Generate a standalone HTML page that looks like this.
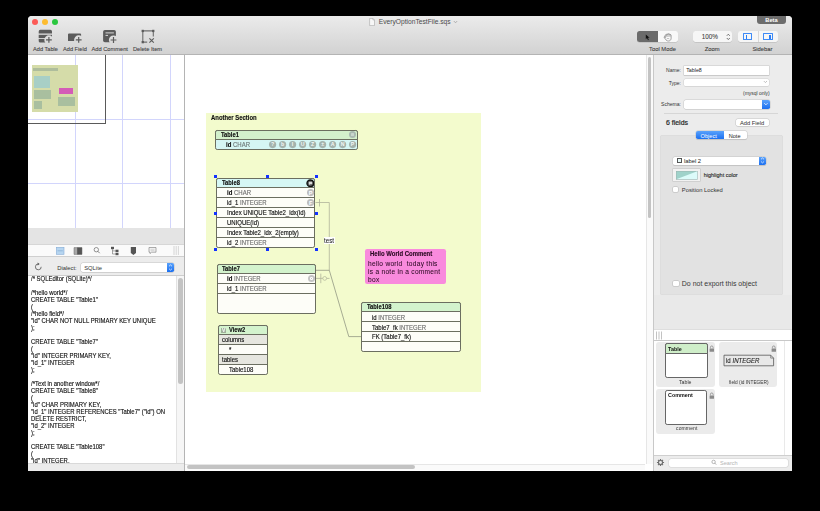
<!DOCTYPE html>
<html><head><meta charset="utf-8">
<style>
*{box-sizing:border-box;margin:0;padding:0}
html,body{width:820px;height:511px;overflow:hidden;background:#000}
body{position:relative;font-family:"Liberation Sans",sans-serif;color:#222}
.a{position:absolute}
.t{position:absolute;white-space:pre;line-height:1}
</style></head><body>
<div class="a" style="left:28.00px;top:16.00px;width:764.00px;height:454.50px;background:#ececec;border-radius:4px 4px 0 0"></div>
<div class="a" style="left:28.00px;top:16.00px;width:764.00px;height:39.00px;background:linear-gradient(#ebebeb,#d2d2d2);border-bottom:1px solid #b4b4b4;border-radius:4px 4px 0 0"></div>
<div class="a" style="left:32.00px;top:18.60px;width:6.2px;height:6.2px;border-radius:50%;background:#fc5b57"></div>
<div class="a" style="left:41.90px;top:18.60px;width:6.2px;height:6.2px;border-radius:50%;background:#fdbc2f"></div>
<div class="a" style="left:52.00px;top:18.60px;width:6.2px;height:6.2px;border-radius:50%;background:#2ac73f"></div>
<svg class="a" style="left:369px;top:18px" width="6" height="8" viewBox="0 0 6 8"><path d="M0.6 0.4H3.9L5.5 2V7.6H0.6Z" fill="#f7f7f7" stroke="#a8a8a8" stroke-width="0.6"/><path d="M3.9 0.4V2H5.5" fill="none" stroke="#a8a8a8" stroke-width="0.5"/></svg>
<div class="t" style="left:378.80px;top:19.00px;font-size:6.660px;font-weight:normal;color:#4b4b4b;">EveryOptionTestFile.sqs</div>
<svg class="a" style="left:453px;top:20px" width="5" height="4" viewBox="0 0 5 4"><path d="M0.8 1L2.5 2.8L4.2 1" fill="none" stroke="#9a9a9a" stroke-width="0.7"/></svg>
<div class="a" style="left:757.00px;top:16.00px;width:29.00px;height:8.00px;background:#6c6c6c;border-radius:0 0 3px 3px"></div>
<div class="t" style="left:765.30px;top:18.00px;font-size:5.700px;font-weight:bold;color:#fff;">Beta</div>
<svg class="a" style="left:37px;top:28px" width="18" height="17" viewBox="0 0 18 17"><defs><mask id="m1"><rect x="-5" y="-5" width="40" height="40" fill="#fff"/><circle cx="11.9" cy="11.9" r="4.6" fill="#000"/></mask></defs><g mask="url(#m1)"><path d="M1.7 3.4 a1.6 1.6 0 0 1 1.6-1.6 H13.4 a1.6 1.6 0 0 1 1.6 1.6 V5.6 H1.7Z" fill="#5b5b5b"/><rect x="1.7" y="6.8" width="13.3" height="3.3" fill="#5b5b5b"/><path d="M1.7 10.9 H15 V14.6 H3.3 a1.6 1.6 0 0 1 -1.6 -1.6Z" fill="#5b5b5b"/></g><path d="M9.0 11.9H14.8M11.9 9.0V14.8" stroke="#5b5b5b" stroke-width="1.2"/></svg>
<svg class="a" style="left:66px;top:28px" width="18" height="17" viewBox="0 0 18 17"><defs><mask id="m2"><rect x="-5" y="-5" width="40" height="40" fill="#fff"/><circle cx="12.7" cy="11.9" r="4.6" fill="#000"/></mask></defs><g mask="url(#m2)"><path d="M2 6.6 a1 1 0 0 1 1-1 H14.1 a1 1 0 0 1 1 1 V12.9 H2Z" fill="#5b5b5b"/></g><path d="M9.799999999999999 11.9H15.6M12.7 9.0V14.8" stroke="#5b5b5b" stroke-width="1.2"/></svg>
<svg class="a" style="left:101px;top:28px" width="18" height="17" viewBox="0 0 18 17"><defs><mask id="m3"><rect x="-5" y="-5" width="40" height="40" fill="#fff"/><circle cx="12.5" cy="12" r="4.6" fill="#000"/></mask></defs><g mask="url(#m3)"><rect x="2.1" y="1.9" width="12.8" height="12.3" rx="1.8" fill="#5b5b5b"/></g><path d="M4.5 4.9H12.9M4.5 7.4H7" stroke="#e6e6e6" stroke-width="0.9"/><path d="M9.6 12H15.4M12.5 9.1V14.9" stroke="#5b5b5b" stroke-width="1.2"/></svg>
<svg class="a" style="left:139px;top:28px" width="18" height="17" viewBox="0 0 18 17"><path d="M3.8 2.9V14.1H8.2M3.8 2.9H14.3V8.4" fill="none" stroke="#6e6e6e" stroke-width="1.1"/><rect x="2.6" y="1.8" width="2.3" height="2.3" fill="#5b5b5b"/><rect x="13.1" y="1.8" width="2.3" height="2.3" fill="#5b5b5b"/><rect x="2.6" y="13.0" width="2.3" height="2.3" fill="#5b5b5b"/><path d="M10.4 10.3L14.8 14.7M14.8 10.3L10.4 14.7" stroke="#5b5b5b" stroke-width="1.1"/></svg>
<div class="t" style="left:33.00px;top:47.00px;font-size:5.640px;font-weight:normal;color:#3c3c3c;-webkit-text-stroke:0.08px currentColor;">Add Table</div>
<div class="t" style="left:63.00px;top:47.00px;font-size:5.630px;font-weight:normal;color:#3c3c3c;-webkit-text-stroke:0.08px currentColor;">Add Field</div>
<div class="t" style="left:91.40px;top:47.00px;font-size:5.720px;font-weight:normal;color:#3c3c3c;-webkit-text-stroke:0.08px currentColor;">Add Comment</div>
<div class="t" style="left:132.90px;top:47.00px;font-size:5.710px;font-weight:normal;color:#3c3c3c;-webkit-text-stroke:0.08px currentColor;">Delete Item</div>
<div class="t" style="left:649.00px;top:47.00px;font-size:5.850px;font-weight:normal;color:#3c3c3c;-webkit-text-stroke:0.08px currentColor;">Tool Mode</div>
<div class="t" style="left:704.70px;top:47.00px;font-size:5.850px;font-weight:normal;color:#3c3c3c;-webkit-text-stroke:0.08px currentColor;">Zoom</div>
<div class="t" style="left:752.40px;top:47.00px;font-size:5.850px;font-weight:normal;color:#3c3c3c;-webkit-text-stroke:0.08px currentColor;">Sidebar</div>
<div class="a" style="left:637.00px;top:31.00px;width:41.00px;height:11.30px;background:#f8f8f8;border-radius:2.5px;box-shadow:0 0.5px 0.5px rgba(0,0,0,0.18)"></div>
<div class="a" style="left:637.00px;top:31.00px;width:21.00px;height:11.30px;background:#6b6b6b;border-radius:2.5px 0 0 2.5px"></div>
<svg class="a" style="left:645px;top:34px" width="6" height="7" viewBox="0 0 6 7"><path d="M0.8 0.5L0.8 5.2L2 4.1L3 6.2L3.8 5.8L2.9 3.8L4.6 3.8Z" fill="#111"/></svg>
<svg class="a" style="left:663px;top:32px" width="10" height="10" viewBox="0 0 10 10"><path d="M2.2 5.6V3.4C2.2 2.6 3.4 2.6 3.4 3.4V2.5C3.4 1.7 4.6 1.7 4.6 2.5V2.2C4.6 1.4 5.8 1.4 5.8 2.2V2.6C5.8 1.8 7.0 1.8 7.0 2.6V3.2C7.0 2.5 8.1 2.5 8.1 3.2V6.2C8.1 8.0 7.0 9.0 5.4 9.0C4.0 9.0 3.2 8.3 2.4 7.2L1.2 5.4C0.9 4.8 1.7 4.3 2.2 4.9Z" fill="#fbfbfb" stroke="#666" stroke-width="0.6"/><path d="M3.4 3.4V5.2M4.6 2.5V5M5.8 2.4V5M7 2.8V5.1" stroke="#888" stroke-width="0.45"/><path d="M3.6 7.0C4.4 6.3 5.6 6.4 6.4 7.0" fill="none" stroke="#777" stroke-width="0.5"/></svg>
<div class="a" style="left:692.90px;top:31.10px;width:39.10px;height:10.90px;background:#f6f6f6;border-radius:2.5px;box-shadow:0 0.5px 0.5px rgba(0,0,0,0.18)"></div>
<div class="t" style="left:701.70px;top:34.00px;font-size:6.330px;font-weight:normal;color:#444;-webkit-text-stroke:0.08px currentColor;">100%</div>
<svg class="a" style="left:726px;top:33px" width="5" height="8" viewBox="0 0 5 8"><path d="M0.8 2.8L2.3 1.2L3.8 2.8M0.8 5.0L2.3 6.6L3.8 5.0" fill="none" stroke="#555" stroke-width="0.8"/></svg>
<div class="a" style="left:738.00px;top:31.10px;width:40.00px;height:10.90px;background:#f6f6f6;border-radius:2.5px;box-shadow:0 0.5px 0.5px rgba(0,0,0,0.18)"></div>
<div class="a" style="left:757.60px;top:31.10px;width:0.50px;height:10.90px;background:#d8d8d8"></div>
<div class="a" style="left:743.10px;top:33.30px;width:9.30px;height:7.10px;border:0.6px solid #3d8af6;border-radius:0.5px"></div>
<div class="a" style="left:745.60px;top:34.80px;width:1.30px;height:4.20px;background:#2a7ef7"></div>
<div class="a" style="left:763.40px;top:33.30px;width:9.40px;height:7.10px;border:0.6px solid #3d8af6;border-radius:0.5px"></div>
<div class="a" style="left:769.30px;top:34.80px;width:1.30px;height:4.20px;background:#2a7ef7"></div>
<div class="a" style="left:28.00px;top:55.00px;width:156.00px;height:172.80px;background:#fff;overflow:hidden"></div>
<div class="a" style="left:75.00px;top:55.00px;width:1.00px;height:172.80px;background:#d2d5fc"></div>
<div class="a" style="left:122.00px;top:55.00px;width:1.00px;height:172.80px;background:#d2d5fc"></div>
<div class="a" style="left:169.60px;top:55.00px;width:1.00px;height:172.80px;background:#d2d5fc"></div>
<div class="a" style="left:28.00px;top:119.00px;width:156.00px;height:1.00px;background:#d2d5fc"></div>
<div class="a" style="left:28.00px;top:183.00px;width:156.00px;height:1.00px;background:#d2d5fc"></div>
<div class="a" style="left:31.70px;top:64.50px;width:46.70px;height:47.50px;background:#d5dca9"></div>
<div class="a" style="left:33.10px;top:67.50px;width:24.70px;height:3.40px;background:#aebd9c"></div>
<div class="a" style="left:33.60px;top:75.60px;width:16.70px;height:12.10px;background:#a8cfc6"></div>
<div class="a" style="left:33.60px;top:89.80px;width:17.00px;height:9.00px;background:#a9bf9f"></div>
<div class="a" style="left:33.60px;top:100.50px;width:8.40px;height:8.10px;background:#a9bf9f"></div>
<div class="a" style="left:58.50px;top:87.70px;width:14.00px;height:6.20px;background:#d45cb7"></div>
<div class="a" style="left:58.10px;top:97.10px;width:17.20px;height:8.60px;background:#a9bf9f"></div>
<div class="a" style="left:28.00px;top:55.00px;width:77.80px;height:68.60px;border-right:1.2px solid #5a5a5a;border-bottom:1.2px solid #5a5a5a"></div>
<div class="a" style="left:28.00px;top:227.80px;width:156.00px;height:16.20px;background:#e4e4e4"></div>
<div class="a" style="left:28.00px;top:244.00px;width:156.00px;height:12.50px;background:#fafafa;border-top:0.6px solid #d6d6d6;border-bottom:0.6px solid #cfcfcf"></div>
<svg class="a" style="left:56px;top:247px" width="9" height="8" viewBox="0 0 9 8"><rect x="0.4" y="0.3" width="7.6" height="7" fill="#b6d5f0" stroke="#85acd6" stroke-width="0.6"/><path d="M1.6 3.8H6.8" stroke="#7aa2cc" stroke-width="0.6"/></svg>
<svg class="a" style="left:73px;top:247px" width="10" height="8" viewBox="0 0 10 8"><path d="M1 0.6H4.6V7.4H1Z" fill="#a8a8a8" stroke="#666" stroke-width="0.5"/><path d="M4.6 0.6H8.9V7.4H4.6Z" fill="#555" stroke="#444" stroke-width="0.5"/></svg>
<svg class="a" style="left:93px;top:246px" width="8" height="9" viewBox="0 0 8 9"><circle cx="3.3" cy="3.7" r="2.2" fill="none" stroke="#666" stroke-width="0.7"/><path d="M4.9 5.3L6.7 7.2" stroke="#666" stroke-width="0.8"/></svg>
<svg class="a" style="left:110px;top:246px" width="10" height="10" viewBox="0 0 10 10"><rect x="1" y="0.8" width="3" height="2.4" fill="#555"/><rect x="5.5" y="3.7" width="3" height="2.4" fill="#555"/><rect x="5.5" y="6.8" width="3" height="2.4" fill="#555"/><path d="M2.5 3.2V8H5.5M2.5 4.9H5.5" fill="none" stroke="#555" stroke-width="0.5"/></svg>
<svg class="a" style="left:130px;top:246px" width="7" height="10" viewBox="0 0 7 10"><path d="M0.8 1H6V7L3.4 9L0.8 7Z" fill="#555"/></svg>
<svg class="a" style="left:148px;top:246px" width="9" height="9" viewBox="0 0 9 9"><path d="M1 1.5H8V6.2H3.5L2 7.6V6.2H1Z" fill="#f4f4f4" stroke="#777" stroke-width="0.6"/><path d="M2.5 3.3H6.5M2.5 4.6H6.5" stroke="#aaa" stroke-width="0.4"/></svg>
<svg class="a" style="left:173px;top:245px" width="8" height="11" viewBox="0 0 8 11"><path d="M1 1V10M3.2 1V10M5.4 1V10" stroke="#bdbdbd" stroke-width="0.6"/></svg>
<div class="a" style="left:28.00px;top:256.50px;width:156.00px;height:19.10px;background:#ececec;border-bottom:0.6px solid #cdcdcd"></div>
<svg class="a" style="left:34px;top:262px" width="10" height="10" viewBox="0 0 10 10"><path d="M7.2 4.8A2.9 2.9 0 1 1 4.5 2" fill="none" stroke="#555" stroke-width="0.8"/><path d="M3.6 0.6L5.6 2L3.6 3.4Z" fill="#555"/></svg>
<div class="t" style="left:57.30px;top:266.00px;font-size:5.840px;font-weight:normal;color:#333;">Dialect:</div>
<div class="a" style="left:80.70px;top:263.30px;width:93.30px;height:8.40px;background:#fff;border-radius:1.8px;box-shadow:0 0 0 0.5px #c4c4c4,0 0.5px 0.6px rgba(0,0,0,0.15)"></div>
<div class="a" style="left:166.90px;top:263.30px;width:7.10px;height:8.40px;background:linear-gradient(#5aa2fb,#1b6ff0);border-radius:0 1.8px 1.8px 0"></div>
<svg class="a" style="left:167px;top:263px" width="7" height="9" viewBox="0 0 7 9"><path d="M2 3.3L3.5 1.9L5 3.3M2 5.7L3.5 7.1L5 5.7" fill="none" stroke="#fff" stroke-width="0.7"/></svg>
<div class="t" style="left:84.20px;top:266.00px;font-size:5.840px;font-weight:normal;color:#333;">SQLite</div>
<div class="a" style="left:28.00px;top:275.60px;width:148.30px;height:187.40px;background:#fff"></div>
<div class="a" style="left:176.30px;top:275.60px;width:7.70px;height:187.40px;background:#f6f6f6;border-left:0.6px solid #e2e2e2"></div>
<div class="a" style="left:178.20px;top:277.60px;width:4.90px;height:106.40px;background:#c3c3c3;border-radius:2.5px"></div>
<div class="a" style="left:28px;top:275.6px;width:148px;height:187.4px;overflow:hidden">
<div class="t" style="left:3.40px;top:0.00px;font-size:6.842px;font-weight:normal;color:#111;transform:scaleX(0.8696);transform-origin:0 0;-webkit-text-stroke:0.14px currentColor;">/* SQLEditor (SQLite)*/</div>
<div class="t" style="left:3.40px;top:14.00px;font-size:6.842px;font-weight:normal;color:#111;transform:scaleX(0.8696);transform-origin:0 0;-webkit-text-stroke:0.14px currentColor;">/*hello world*/</div>
<div class="t" style="left:3.40px;top:21.00px;font-size:6.842px;font-weight:normal;color:#111;transform:scaleX(0.8696);transform-origin:0 0;-webkit-text-stroke:0.14px currentColor;">CREATE TABLE "Table1"</div>
<div class="t" style="left:3.40px;top:28.00px;font-size:6.842px;font-weight:normal;color:#111;transform:scaleX(0.8696);transform-origin:0 0;-webkit-text-stroke:0.14px currentColor;">(</div>
<div class="t" style="left:3.40px;top:35.00px;font-size:6.842px;font-weight:normal;color:#111;transform:scaleX(0.8696);transform-origin:0 0;-webkit-text-stroke:0.14px currentColor;">/*hello field*/</div>
<div class="t" style="left:3.40px;top:42.00px;font-size:6.842px;font-weight:normal;color:#111;transform:scaleX(0.8696);transform-origin:0 0;-webkit-text-stroke:0.14px currentColor;">"id" CHAR NOT NULL PRIMARY KEY UNIQUE</div>
<div class="t" style="left:3.40px;top:49.00px;font-size:6.842px;font-weight:normal;color:#111;transform:scaleX(0.8696);transform-origin:0 0;-webkit-text-stroke:0.14px currentColor;">);</div>
<div class="t" style="left:3.40px;top:63.00px;font-size:6.842px;font-weight:normal;color:#111;transform:scaleX(0.8696);transform-origin:0 0;-webkit-text-stroke:0.14px currentColor;">CREATE TABLE "Table7"</div>
<div class="t" style="left:3.40px;top:70.00px;font-size:6.842px;font-weight:normal;color:#111;transform:scaleX(0.8696);transform-origin:0 0;-webkit-text-stroke:0.14px currentColor;">(</div>
<div class="t" style="left:3.40px;top:77.00px;font-size:6.842px;font-weight:normal;color:#111;transform:scaleX(0.8696);transform-origin:0 0;-webkit-text-stroke:0.14px currentColor;">"id" INTEGER PRIMARY KEY,</div>
<div class="t" style="left:3.40px;top:84.00px;font-size:6.842px;font-weight:normal;color:#111;transform:scaleX(0.8696);transform-origin:0 0;-webkit-text-stroke:0.14px currentColor;">"id_1" INTEGER</div>
<div class="t" style="left:3.40px;top:91.00px;font-size:6.842px;font-weight:normal;color:#111;transform:scaleX(0.8696);transform-origin:0 0;-webkit-text-stroke:0.14px currentColor;">);</div>
<div class="t" style="left:3.40px;top:105.00px;font-size:6.842px;font-weight:normal;color:#111;transform:scaleX(0.8696);transform-origin:0 0;-webkit-text-stroke:0.14px currentColor;">/*Text in another window*/</div>
<div class="t" style="left:3.40px;top:112.00px;font-size:6.842px;font-weight:normal;color:#111;transform:scaleX(0.8696);transform-origin:0 0;-webkit-text-stroke:0.14px currentColor;">CREATE TABLE "Table8"</div>
<div class="t" style="left:3.40px;top:119.00px;font-size:6.842px;font-weight:normal;color:#111;transform:scaleX(0.8696);transform-origin:0 0;-webkit-text-stroke:0.14px currentColor;">(</div>
<div class="t" style="left:3.40px;top:126.00px;font-size:6.842px;font-weight:normal;color:#111;transform:scaleX(0.8696);transform-origin:0 0;-webkit-text-stroke:0.14px currentColor;">"id" CHAR PRIMARY KEY,</div>
<div class="t" style="left:3.40px;top:133.00px;font-size:6.842px;font-weight:normal;color:#111;transform:scaleX(0.8696);transform-origin:0 0;-webkit-text-stroke:0.14px currentColor;">"id_1" INTEGER REFERENCES "Table7" ("id") ON</div>
<div class="t" style="left:3.40px;top:140.00px;font-size:6.842px;font-weight:normal;color:#111;transform:scaleX(0.8696);transform-origin:0 0;-webkit-text-stroke:0.14px currentColor;">DELETE RESTRICT,</div>
<div class="t" style="left:3.40px;top:147.00px;font-size:6.842px;font-weight:normal;color:#111;transform:scaleX(0.8696);transform-origin:0 0;-webkit-text-stroke:0.14px currentColor;">"id_2" INTEGER</div>
<div class="t" style="left:3.40px;top:154.00px;font-size:6.842px;font-weight:normal;color:#111;transform:scaleX(0.8696);transform-origin:0 0;-webkit-text-stroke:0.14px currentColor;">);</div>
<div class="t" style="left:3.40px;top:168.00px;font-size:6.842px;font-weight:normal;color:#111;transform:scaleX(0.8696);transform-origin:0 0;-webkit-text-stroke:0.14px currentColor;">CREATE TABLE "Table108"</div>
<div class="t" style="left:3.40px;top:175.00px;font-size:6.842px;font-weight:normal;color:#111;transform:scaleX(0.8696);transform-origin:0 0;-webkit-text-stroke:0.14px currentColor;">(</div>
<div class="t" style="left:3.40px;top:182.00px;font-size:6.842px;font-weight:normal;color:#111;transform:scaleX(0.8696);transform-origin:0 0;-webkit-text-stroke:0.14px currentColor;">"id" INTEGER,</div>
</div>
<div class="a" style="left:28.00px;top:463.00px;width:156.00px;height:7.50px;background:#ececec;border-top:0.6px solid #d9d9d9"></div>
<div class="a" style="left:184.00px;top:55.00px;width:1.10px;height:415.50px;background:#b4b4b4"></div>
<div class="a" style="left:185.20px;top:55.00px;width:467.80px;height:415.50px;background:#fff"></div>
<div class="a" style="left:645.50px;top:55.00px;width:7.50px;height:408.80px;background:#fafafa;border-left:0.6px solid #e6e6e6"></div>
<div class="a" style="left:647.60px;top:57.30px;width:3.70px;height:160.70px;background:#c3c3c3;border-radius:2px"></div>
<div class="a" style="left:185.20px;top:463.80px;width:460.30px;height:6.70px;background:#fafafa;border-top:0.6px solid #e6e6e6"></div>
<div class="a" style="left:186.70px;top:465.20px;width:228.30px;height:3.70px;background:#c3c3c3;border-radius:2px"></div>
<div class="a" style="left:653.00px;top:55.00px;width:1.00px;height:415.50px;background:#c8c8c8"></div>
<div class="a" style="left:205.80px;top:112.70px;width:275.10px;height:279.70px;background:#f3fbcd"></div>
<div class="t" style="left:210.90px;top:115.00px;font-size:6.819px;font-weight:bold;color:#111;transform:scaleX(0.8696);transform-origin:0 0;-webkit-text-stroke:0.15px currentColor;">Another Section</div>
<div class="a" style="left:215.40px;top:130.10px;width:142.40px;height:19.50px;background:#d5f6f4;border:0.9px solid #6b6e60;border-radius:2.2px"></div>
<div class="a" style="left:215.40px;top:130.10px;width:142.40px;height:9.70px;background:#d3f0cc;border:0.9px solid #6b6e60;border-radius:2.2px 2.2px 0 0"></div>
<div class="t" style="left:221.20px;top:132.00px;font-size:6.670px;font-weight:bold;color:#111;transform:scaleX(0.8696);transform-origin:0 0;-webkit-text-stroke:0.15px currentColor;">Table1</div>
<div class="t" style="left:226.10px;top:142.00px;font-size:6.900px;font-weight:normal;color:#111;transform:scaleX(0.8696);transform-origin:0 0;-webkit-text-stroke:0.15px currentColor;"><b style="color:#111">id</b> <span style="color:#6f7a7a">CHAR</span></div>
<svg class="a" style="left:268.3px;top:139.9px" width="9.2" height="9.2" viewBox="0 0 9.2 9.2"><circle cx="4.6" cy="4.6" r="3.6" fill="#a3b3ad" /><text x="4.6" y="6.47" text-anchor="middle" font-family="Liberation Sans" font-weight="bold" font-size="5.2" fill="#f4f8f6">?</text></svg>
<svg class="a" style="left:278.26px;top:139.9px" width="9.2" height="9.2" viewBox="0 0 9.2 9.2"><circle cx="4.6" cy="4.6" r="3.6" fill="#a3b3ad" /><text x="4.6" y="6.47" text-anchor="middle" font-family="Liberation Sans" font-weight="bold" font-size="5.2" fill="#f4f8f6">b</text></svg>
<svg class="a" style="left:288.22px;top:139.9px" width="9.2" height="9.2" viewBox="0 0 9.2 9.2"><circle cx="4.6" cy="4.6" r="3.6" fill="#a3b3ad" /><text x="4.6" y="6.47" text-anchor="middle" font-family="Liberation Sans" font-weight="bold" font-size="5.2" fill="#f4f8f6">I</text></svg>
<svg class="a" style="left:298.18px;top:139.9px" width="9.2" height="9.2" viewBox="0 0 9.2 9.2"><circle cx="4.6" cy="4.6" r="3.6" fill="#a3b3ad" /><text x="4.6" y="6.47" text-anchor="middle" font-family="Liberation Sans" font-weight="bold" font-size="5.2" fill="#f4f8f6">U</text></svg>
<svg class="a" style="left:308.14px;top:139.9px" width="9.2" height="9.2" viewBox="0 0 9.2 9.2"><circle cx="4.6" cy="4.6" r="3.6" fill="#a3b3ad" /><text x="4.6" y="6.47" text-anchor="middle" font-family="Liberation Sans" font-weight="bold" font-size="5.2" fill="#f4f8f6">Z</text></svg>
<svg class="a" style="left:318.1px;top:139.9px" width="9.2" height="9.2" viewBox="0 0 9.2 9.2"><circle cx="4.6" cy="4.6" r="3.6" fill="#a3b3ad" /><text x="4.6" y="6.47" text-anchor="middle" font-family="Liberation Sans" font-weight="bold" font-size="5.2" fill="#f4f8f6">±</text></svg>
<svg class="a" style="left:328.06px;top:139.9px" width="9.2" height="9.2" viewBox="0 0 9.2 9.2"><circle cx="4.6" cy="4.6" r="3.6" fill="#a3b3ad" /><text x="4.6" y="6.47" text-anchor="middle" font-family="Liberation Sans" font-weight="bold" font-size="5.2" fill="#f4f8f6">A</text></svg>
<svg class="a" style="left:338.02px;top:139.9px" width="9.2" height="9.2" viewBox="0 0 9.2 9.2"><circle cx="4.6" cy="4.6" r="3.6" fill="#a3b3ad" /><text x="4.6" y="6.47" text-anchor="middle" font-family="Liberation Sans" font-weight="bold" font-size="5.2" fill="#f4f8f6">N</text></svg>
<svg class="a" style="left:347.98px;top:139.9px" width="9.2" height="9.2" viewBox="0 0 9.2 9.2"><circle cx="4.6" cy="4.6" r="3.6" fill="#a3b3ad" /><text x="4.6" y="6.47" text-anchor="middle" font-family="Liberation Sans" font-weight="bold" font-size="5.2" fill="#f4f8f6">P</text></svg>
<svg class="a" style="left:348.1px;top:130.3px" width="9.0" height="9.0" viewBox="0 0 9.0 9.0"><circle cx="4.5" cy="4.5" r="3.5" fill="#a9b9b2" /></svg>
<div class="a" style="left:350.8px;top:133px;width:3.6px;height:3.2px;background:#c9d6ce;border-radius:0.5px"></div>
<div class="a" style="left:216.20px;top:178.00px;width:99.10px;height:69.80px;background:#fdfdf8;border:0.9px solid #6b6e60;border-radius:2.2px"></div>
<div class="a" style="left:216.20px;top:178.00px;width:99.10px;height:9.80px;background:#d6f7f5;border:0.9px solid #6b6e60;border-radius:2.2px 2.2px 0 0"></div>
<div class="a" style="left:216.60px;top:197.15px;width:98.40px;height:0.90px;background:#6b6e60"></div>
<div class="a" style="left:216.60px;top:206.95px;width:98.40px;height:0.90px;background:#6b6e60"></div>
<div class="a" style="left:216.60px;top:216.85px;width:98.40px;height:0.90px;background:#6b6e60"></div>
<div class="a" style="left:216.60px;top:226.85px;width:98.40px;height:0.90px;background:#6b6e60"></div>
<div class="a" style="left:216.60px;top:236.75px;width:98.40px;height:0.90px;background:#6b6e60"></div>
<div class="t" style="left:222.20px;top:180.00px;font-size:6.670px;font-weight:bold;color:#111;transform:scaleX(0.8696);transform-origin:0 0;-webkit-text-stroke:0.15px currentColor;">Table8</div>
<div class="t" style="left:226.60px;top:190.00px;font-size:6.900px;font-weight:normal;color:#222;transform:scaleX(0.8696);transform-origin:0 0;-webkit-text-stroke:0.15px currentColor;"><b style="color:#111">id</b> <span style="color:#707070">CHAR</span></div>
<div class="t" style="left:226.60px;top:200.00px;font-size:6.900px;font-weight:normal;color:#222;transform:scaleX(0.8696);transform-origin:0 0;-webkit-text-stroke:0.15px currentColor;"><span style="color:#111">id_1</span> <span style="color:#707070">INTEGER</span></div>
<div class="t" style="left:226.60px;top:210.00px;font-size:6.900px;font-weight:normal;color:#111;transform:scaleX(0.8696);transform-origin:0 0;-webkit-text-stroke:0.15px currentColor;">Index UNIQUE Table2_idx(id)</div>
<div class="t" style="left:226.60px;top:220.00px;font-size:6.900px;font-weight:normal;color:#111;transform:scaleX(0.8696);transform-origin:0 0;-webkit-text-stroke:0.15px currentColor;">UNIQUE(id)</div>
<div class="t" style="left:226.60px;top:230.00px;font-size:6.900px;font-weight:normal;color:#111;transform:scaleX(0.8696);transform-origin:0 0;-webkit-text-stroke:0.15px currentColor;">Index Table2_idx_2(empty)</div>
<div class="t" style="left:226.60px;top:240.00px;font-size:6.900px;font-weight:normal;color:#222;transform:scaleX(0.8696);transform-origin:0 0;-webkit-text-stroke:0.15px currentColor;"><span style="color:#111">id_2</span> <span style="color:#707070">INTEGER</span></div>
<svg class="a" style="left:305.8px;top:178.7px" width="8.6" height="8.6" viewBox="0 0 8.6 8.6"><circle cx="4.3" cy="4.3" r="3.3" fill="#555" stroke="#111" stroke-width="1.4"/></svg>
<svg class="a" style="left:307.6px;top:180.8px" width="5" height="5" viewBox="0 0 5 5"><path d="M0.8 0.8H4.2V3.2H2.2L1.2 4.2V3.2H0.8Z" fill="#d8d8d8"/></svg>
<svg class="a" style="left:305.5px;top:188.2px" width="9.2" height="9.2" viewBox="0 0 9.2 9.2"><circle cx="4.6" cy="4.6" r="3.6" fill="#bdbdbd" /><text x="4.6" y="6.62" text-anchor="middle" font-family="Liberation Sans" font-weight="bold" font-size="5.6" fill="#fff">P</text></svg>
<svg class="a" style="left:305.5px;top:197.9px" width="9.2" height="9.2" viewBox="0 0 9.2 9.2"><circle cx="4.6" cy="4.6" r="3.6" fill="#bdbdbd" /><text x="4.6" y="6.62" text-anchor="middle" font-family="Liberation Sans" font-weight="bold" font-size="5.6" fill="#fff">F</text></svg>
<div class="a" style="left:213.60px;top:174.90px;width:3.00px;height:3.00px;background:#1432ff"></div>
<div class="a" style="left:213.60px;top:212.20px;width:3.00px;height:3.00px;background:#1432ff"></div>
<div class="a" style="left:213.60px;top:247.50px;width:3.00px;height:3.00px;background:#1432ff"></div>
<div class="a" style="left:266.10px;top:174.90px;width:3.00px;height:3.00px;background:#1432ff"></div>
<div class="a" style="left:266.10px;top:247.50px;width:3.00px;height:3.00px;background:#1432ff"></div>
<div class="a" style="left:315.30px;top:174.90px;width:3.00px;height:3.00px;background:#1432ff"></div>
<div class="a" style="left:315.30px;top:212.20px;width:3.00px;height:3.00px;background:#1432ff"></div>
<div class="a" style="left:315.30px;top:247.50px;width:3.00px;height:3.00px;background:#1432ff"></div>
<svg class="a" style="left:314px;top:199px" width="20" height="74" viewBox="0 0 20 74"><path d="M1.5 3.5H15.3V71.2M5.5 0V7.5" fill="none" stroke="#b0b49a" stroke-width="0.8"/></svg>
<svg class="a" style="left:315px;top:269px" width="50" height="70" viewBox="0 0 50 70"><path d="M1 1.3H14.3L33.8 67.6H46.5" fill="none" stroke="#858a78" stroke-width="0.7"/></svg>
<svg class="a" style="left:315px;top:273px" width="16" height="11" viewBox="0 0 16 11"><path d="M1 5.4H14.5M5.8 0.6V10.2" fill="none" stroke="#b0b49a" stroke-width="0.8"/><circle cx="9.7" cy="5.4" r="1.9" fill="#f3fbcd" stroke="#b0b49a" stroke-width="0.7"/></svg>
<div class="a" style="left:323.90px;top:236.70px;width:10.80px;height:7.10px;background:#fff"></div>
<div class="t" style="left:324.10px;top:238.00px;font-size:6.944px;font-weight:normal;color:#222;transform:scaleX(0.8929);transform-origin:0 0;-webkit-text-stroke:0.06px currentColor;">test</div>
<div class="a" style="left:216.80px;top:264.10px;width:99.70px;height:49.50px;background:#fdfdf8;border:0.9px solid #6b6e60;border-radius:2.2px"></div>
<div class="a" style="left:216.80px;top:264.10px;width:99.70px;height:9.90px;background:#d3f3cd;border:0.9px solid #6b6e60;border-radius:2.2px 2.2px 0 0"></div>
<div class="a" style="left:217.20px;top:282.85px;width:98.90px;height:0.90px;background:#6b6e60"></div>
<div class="a" style="left:217.20px;top:292.85px;width:98.90px;height:0.90px;background:#6b6e60"></div>
<div class="t" style="left:222.40px;top:266.00px;font-size:6.670px;font-weight:bold;color:#111;transform:scaleX(0.8696);transform-origin:0 0;-webkit-text-stroke:0.15px currentColor;">Table7</div>
<div class="t" style="left:227.30px;top:276.00px;font-size:6.900px;font-weight:normal;color:#222;transform:scaleX(0.8696);transform-origin:0 0;-webkit-text-stroke:0.15px currentColor;"><b style="color:#111">id</b> <span style="color:#707070">INTEGER</span></div>
<div class="t" style="left:227.30px;top:286.00px;font-size:6.900px;font-weight:normal;color:#222;transform:scaleX(0.8696);transform-origin:0 0;-webkit-text-stroke:0.15px currentColor;"><span style="color:#111">id_1</span> <span style="color:#707070">INTEGER</span></div>
<svg class="a" style="left:307.2px;top:273.9px" width="9.0" height="9.0" viewBox="0 0 9.0 9.0"><circle cx="4.5" cy="4.5" r="3.5" fill="#c4c4c4" /></svg>
<div class="a" style="left:309.8px;top:277.2px;width:3.6px;height:2.4px;border:0.5px solid #fff;border-radius:50%"></div>
<div class="a" style="left:218.30px;top:324.60px;width:49.60px;height:50.00px;background:#fdfdf8;border:0.9px solid #6b6e60;border-radius:2.2px"></div>
<div class="a" style="left:218.30px;top:324.60px;width:49.60px;height:10.20px;background:#d3f3cd;border:0.9px solid #6b6e60;border-radius:2.2px 2.2px 0 0"></div>
<div class="a" style="left:218.80px;top:334.80px;width:48.60px;height:9.70px;background:#e6e6df"></div>
<div class="a" style="left:218.80px;top:354.50px;width:48.60px;height:10.20px;background:#e6e6df"></div>
<div class="a" style="left:218.70px;top:344.05px;width:48.80px;height:0.90px;background:#6b6e60"></div>
<div class="a" style="left:218.70px;top:354.05px;width:48.80px;height:0.90px;background:#6b6e60"></div>
<div class="a" style="left:218.70px;top:364.25px;width:48.80px;height:0.90px;background:#6b6e60"></div>
<div class="a" style="left:220.80px;top:327.50px;width:5.70px;height:5.10px;background:#9fb09a"></div>
<div class="t" style="left:221.90px;top:328.00px;font-size:5.750px;font-weight:bold;color:#f4f4f4;transform:scaleX(0.8696);transform-origin:0 0;-webkit-text-stroke:0.15px currentColor;">V</div>
<div class="t" style="left:229.10px;top:327.00px;font-size:6.670px;font-weight:bold;color:#111;transform:scaleX(0.8696);transform-origin:0 0;-webkit-text-stroke:0.15px currentColor;">View2</div>
<div class="t" style="left:222.10px;top:337.00px;font-size:6.900px;font-weight:normal;color:#111;transform:scaleX(0.8696);transform-origin:0 0;-webkit-text-stroke:0.15px currentColor;">columns</div>
<div class="t" style="left:228.50px;top:347.00px;font-size:6.900px;font-weight:normal;color:#111;transform:scaleX(0.8696);transform-origin:0 0;-webkit-text-stroke:0.15px currentColor;">*</div>
<div class="t" style="left:222.10px;top:357.00px;font-size:6.900px;font-weight:normal;color:#111;transform:scaleX(0.8696);transform-origin:0 0;-webkit-text-stroke:0.15px currentColor;">tables</div>
<div class="t" style="left:228.50px;top:367.00px;font-size:6.900px;font-weight:normal;color:#111;transform:scaleX(0.8696);transform-origin:0 0;-webkit-text-stroke:0.15px currentColor;">Table108</div>
<div class="a" style="left:361.20px;top:302.20px;width:99.40px;height:49.50px;background:#fdfdf8;border:0.9px solid #6b6e60;border-radius:2.2px"></div>
<div class="a" style="left:361.20px;top:302.20px;width:99.40px;height:9.80px;background:#d3f3cd;border:0.9px solid #6b6e60;border-radius:2.2px 2.2px 0 0"></div>
<div class="a" style="left:361.60px;top:320.85px;width:98.60px;height:0.90px;background:#6b6e60"></div>
<div class="a" style="left:361.60px;top:331.05px;width:98.60px;height:0.90px;background:#6b6e60"></div>
<div class="a" style="left:361.60px;top:340.95px;width:98.60px;height:0.90px;background:#6b6e60"></div>
<div class="t" style="left:366.90px;top:304.00px;font-size:6.670px;font-weight:bold;color:#111;transform:scaleX(0.8696);transform-origin:0 0;-webkit-text-stroke:0.15px currentColor;">Table108</div>
<div class="t" style="left:371.50px;top:315.00px;font-size:6.900px;font-weight:normal;color:#222;transform:scaleX(0.8696);transform-origin:0 0;-webkit-text-stroke:0.15px currentColor;"><span style="color:#111">id</span> <span style="color:#707070">INTEGER</span></div>
<div class="t" style="left:371.50px;top:325.00px;font-size:6.900px;font-weight:normal;color:#222;transform:scaleX(0.8696);transform-origin:0 0;-webkit-text-stroke:0.15px currentColor;"><span style="color:#111">Table7_fk</span> <span style="color:#707070">INTEGER</span></div>
<div class="t" style="left:371.50px;top:334.00px;font-size:6.900px;font-weight:normal;color:#111;transform:scaleX(0.8696);transform-origin:0 0;-webkit-text-stroke:0.15px currentColor;">FK (Table7_fk)</div>
<div class="a" style="left:365.30px;top:249.10px;width:80.90px;height:34.90px;background:#f98add;border-radius:2.2px"></div>
<div class="t" style="left:370.10px;top:251.00px;font-size:6.877px;font-weight:bold;color:#2a0a22;transform:scaleX(0.8696);transform-origin:0 0;-webkit-text-stroke:0.15px currentColor;">Hello World Comment</div>
<div class="t" style="left:367.90px;top:261.00px;font-size:7.128px;font-weight:normal;color:#2a0a22;transform:scaleX(0.9259);transform-origin:0 0;-webkit-text-stroke:0.05px currentColor;letter-spacing:0.3px">hello world  today this</div>
<div class="t" style="left:367.90px;top:269.00px;font-size:7.128px;font-weight:normal;color:#2a0a22;transform:scaleX(0.9259);transform-origin:0 0;-webkit-text-stroke:0.05px currentColor;letter-spacing:0.3px">is a note in a comment</div>
<div class="t" style="left:367.90px;top:277.00px;font-size:7.128px;font-weight:normal;color:#2a0a22;transform:scaleX(0.9259);transform-origin:0 0;-webkit-text-stroke:0.05px currentColor;letter-spacing:0.3px">box</div>
<div class="a" style="left:654.00px;top:55.00px;width:138.00px;height:400.00px;background:#ececec"></div>
<div class="a" style="left:654.00px;top:295.00px;width:138.00px;height:34.00px;background:#e9e9e9"></div>
<div class="t" style="left:666.10px;top:68.00px;font-size:5.060px;font-weight:normal;color:#333;">Name:</div>
<div class="a" style="left:684.00px;top:65.70px;width:85.00px;height:8.90px;background:#fff;box-shadow:0 0 0 0.5px #c6c6c6,0 0.6px 0.6px rgba(0,0,0,0.12)"></div>
<div class="t" style="left:686.20px;top:68.00px;font-size:5.300px;font-weight:normal;color:#222;">Table8</div>
<div class="t" style="left:668.70px;top:81.00px;font-size:5.020px;font-weight:normal;color:#333;">Type:</div>
<div class="a" style="left:684.00px;top:78.50px;width:85.00px;height:7.70px;background:#fff;border-radius:1.6px;box-shadow:0 0 0 0.5px #d0d0d0,0 0.6px 0.6px rgba(0,0,0,0.12)"></div>
<svg class="a" style="left:763px;top:80px" width="5" height="4" viewBox="0 0 5 4"><path d="M0.8 1L2.4 2.6L4 1" fill="none" stroke="#9a9a9a" stroke-width="0.6"/></svg>
<div class="t" style="left:743.00px;top:92.00px;font-size:4.950px;font-weight:normal;color:#333;">(mysql only)</div>
<div class="t" style="left:661.00px;top:102.00px;font-size:5.070px;font-weight:normal;color:#333;">Schema:</div>
<div class="a" style="left:684.00px;top:99.80px;width:85.70px;height:8.90px;background:#fff;border-radius:1.8px;box-shadow:0 0 0 0.5px #c8c8c8,0 0.6px 0.6px rgba(0,0,0,0.12)"></div>
<div class="a" style="left:762.00px;top:99.80px;width:7.70px;height:8.90px;background:linear-gradient(#5aa2fb,#1b6ff0);border-radius:0 1.8px 1.8px 0"></div>
<svg class="a" style="left:763px;top:101px" width="6" height="6" viewBox="0 0 6 6"><path d="M1.3 2.2L2.9 3.8L4.5 2.2" fill="none" stroke="#fff" stroke-width="0.8"/></svg>
<div class="a" style="left:664.40px;top:113.30px;width:113.60px;height:0.50px;background:#d6d6d6"></div>
<div class="t" style="left:666.00px;top:120.00px;font-size:6.950px;font-weight:normal;color:#2a2a2a;-webkit-text-stroke:0.22px currentColor;">6 fields</div>
<div class="a" style="left:736.00px;top:118.60px;width:33.00px;height:7.70px;background:#fff;border-radius:1.8px;box-shadow:0 0 0 0.5px #c6c6c6,0 0.6px 0.7px rgba(0,0,0,0.15)"></div>
<div class="t" style="left:739.90px;top:121.00px;font-size:5.770px;font-weight:normal;color:#333;">Add Field</div>
<div class="a" style="left:660.10px;top:135.20px;width:122.60px;height:159.60px;background:#e2e2e2;border-radius:2.5px;box-shadow:inset 0 0 0 0.5px #d8d8d8"></div>
<div class="a" style="left:696.00px;top:131.30px;width:50.90px;height:8.20px;background:#fff;border-radius:1.8px;box-shadow:0 0 0 0.5px #c6c6c6,0 0.6px 0.7px rgba(0,0,0,0.15)"></div>
<div class="a" style="left:696.00px;top:131.30px;width:27.80px;height:8.20px;background:linear-gradient(#5aa2fb,#1c70f1);border-radius:1.8px 0 0 1.8px"></div>
<div class="t" style="left:700.60px;top:134.00px;font-size:5.600px;font-weight:normal;color:#fff;">Object</div>
<div class="t" style="left:728.70px;top:134.00px;font-size:5.600px;font-weight:normal;color:#222;">Note</div>
<div class="a" style="left:673.40px;top:156.60px;width:92.60px;height:8.00px;background:#fff;border-radius:1.8px;box-shadow:0 0 0 0.5px #c6c6c6,0 0.6px 0.7px rgba(0,0,0,0.15)"></div>
<div class="a" style="left:759.10px;top:156.60px;width:6.90px;height:8.00px;background:linear-gradient(#5aa2fb,#1b6ff0);border-radius:0 1.8px 1.8px 0"></div>
<svg class="a" style="left:759px;top:156px" width="7" height="9" viewBox="0 0 7 9"><path d="M2 3.3L3.5 1.9L5 3.3M2 5.5L3.5 6.9L5 5.5" fill="none" stroke="#fff" stroke-width="0.7"/></svg>
<div class="a" style="left:677.20px;top:158.30px;width:4.80px;height:4.70px;background:#e8f8f8;border:0.6px solid #555"></div>
<div class="t" style="left:684.00px;top:159.00px;font-size:5.800px;font-weight:normal;color:#222;">label 2</div>
<div class="a" style="left:673.40px;top:169.00px;width:26.30px;height:12.30px;background:#f2f2f2;box-shadow:0 0 0 0.5px #bdbdbd"></div>
<svg class="a" style="left:676px;top:171px" width="22" height="9" viewBox="0 0 22 9"><rect x="0" y="0" width="21.5" height="8.5" fill="#9fd2ca" stroke="#999" stroke-width="0.5"/><path d="M0.3 8.3L21.3 0.3V8.3Z" fill="#dcfbfa"/></svg>
<div class="t" style="left:703.70px;top:173.00px;font-size:5.500px;font-weight:normal;color:#333;-webkit-text-stroke:0.15px currentColor;">highlight color</div>
<div class="a" style="left:673.40px;top:186.80px;width:5.00px;height:5.30px;background:#fff;border-radius:1px;box-shadow:0 0 0 0.5px #b5b5b5"></div>
<div class="t" style="left:681.80px;top:188.00px;font-size:5.800px;font-weight:normal;color:#333;">Position Locked</div>
<div class="a" style="left:673.40px;top:280.60px;width:5.30px;height:5.60px;background:#fff;border-radius:1px;box-shadow:0 0 0 0.5px #b5b5b5"></div>
<div class="t" style="left:681.80px;top:280.00px;font-size:6.980px;font-weight:normal;color:#383838;">Do not export this object</div>
<div class="a" style="left:654.00px;top:328.80px;width:138.00px;height:12.50px;background:#fff;border-top:0.5px solid #dedede;border-bottom:0.6px solid #c8c8c8"></div>
<svg class="a" style="left:655px;top:330px" width="8" height="11" viewBox="0 0 8 11"><path d="M1.5 1.5V9.5M4 1.5V9.5M6.5 1.5V9.5" stroke="#a8a8a8" stroke-width="0.7"/></svg>
<div class="a" style="left:654.00px;top:341.30px;width:138.00px;height:113.70px;background:#fff"></div>
<div class="a" style="left:783.50px;top:341.00px;width:0.80px;height:114.00px;background:#e9e9e9"></div>
<div class="a" style="left:656.00px;top:342.40px;width:59.00px;height:44.20px;background:#ebebeb;border-radius:3px"></div>
<div class="a" style="left:718.60px;top:342.40px;width:58.80px;height:44.20px;background:#ebebeb;border-radius:3px"></div>
<div class="a" style="left:656.00px;top:389.00px;width:59.00px;height:44.60px;background:#ebebeb;border-radius:3px"></div>
<div class="a" style="left:665.00px;top:343.40px;width:43.00px;height:34.60px;background:#fff;border:0.8px solid #666;border-radius:2.2px"></div>
<div class="a" style="left:665.00px;top:343.40px;width:43.00px;height:10.20px;background:#cfeec9;border:0.8px solid #666;border-radius:2.2px 2.2px 0 0"></div>
<div class="t" style="left:668.00px;top:346.00px;font-size:6.210px;font-weight:bold;color:#111;transform:scaleX(0.8696);transform-origin:0 0;">Table</div>
<div class="t" style="left:679.30px;top:380.00px;font-size:5.720px;font-weight:normal;color:#333;transform:scaleX(0.9091);transform-origin:0 0;">Table</div>
<svg class="a" style="left:723px;top:354px" width="53" height="13" viewBox="0 0 53 13"><path d="M1 1.2H47.7L50.6 4.1V11.8H1Z" fill="#e8e8e8" stroke="#555" stroke-width="0.8"/><path d="M47.7 1.2V4.1H50.6" fill="none" stroke="#555" stroke-width="0.6"/></svg>
<div class="t" style="left:725.90px;top:358.00px;font-size:7.137px;font-weight:normal;color:#222;transform:scaleX(0.8547);transform-origin:0 0;-webkit-text-stroke:0.1px currentColor;">id <i>INTEGER</i></div>
<div class="t" style="left:728.80px;top:380.00px;font-size:5.258px;font-weight:normal;color:#333;transform:scaleX(0.9091);transform-origin:0 0;">field (id INTEGER)</div>
<div class="a" style="left:665.00px;top:390.40px;width:42.00px;height:34.60px;background:#fff;border:0.8px solid #666;border-radius:2.2px"></div>
<div class="t" style="left:667.50px;top:392.00px;font-size:6.210px;font-weight:bold;color:#111;transform:scaleX(0.8696);transform-origin:0 0;">Comment</div>
<div class="t" style="left:676.30px;top:426.00px;font-size:5.500px;font-weight:normal;color:#333;transform:scaleX(0.9091);transform-origin:0 0;letter-spacing:0.15px">comment</div>
<svg class="a" style="left:708.6px;top:345.0px" width="6" height="8" viewBox="0 0 6 8"><path d="M1.4 3.4V2.3A1.35 1.35 0 0 1 4.1 2.3V3.4" fill="none" stroke="#8a8a8a" stroke-width="0.8"/><rect x="0.6" y="3.4" width="4.4" height="3.4" rx="0.4" fill="#8a8a8a"/></svg>
<svg class="a" style="left:771px;top:345.0px" width="6" height="8" viewBox="0 0 6 8"><path d="M1.4 3.4V2.3A1.35 1.35 0 0 1 4.1 2.3V3.4" fill="none" stroke="#8a8a8a" stroke-width="0.8"/><rect x="0.6" y="3.4" width="4.4" height="3.4" rx="0.4" fill="#8a8a8a"/></svg>
<svg class="a" style="left:708.6px;top:391.79999999999995px" width="6" height="8" viewBox="0 0 6 8"><path d="M1.4 3.4V2.3A1.35 1.35 0 0 1 4.1 2.3V3.4" fill="none" stroke="#8a8a8a" stroke-width="0.8"/><rect x="0.6" y="3.4" width="4.4" height="3.4" rx="0.4" fill="#8a8a8a"/></svg>
<div class="a" style="left:654.00px;top:454.70px;width:138.00px;height:15.80px;background:#ececec;border-top:0.6px solid #cfcfcf"></div>
<svg class="a" style="left:656.4px;top:458.4px" width="9" height="9" viewBox="0 0 9 9"><path d="M7.13 3.91 L8.06 4.00 L8.06 5.00 L7.13 5.09 L6.78 5.95 L7.38 6.67 L6.67 7.38 L5.95 6.78 L5.09 7.13 L5.00 8.06 L4.00 8.06 L3.91 7.13 L3.05 6.78 L2.33 7.38 L1.62 6.67 L2.22 5.95 L1.87 5.09 L0.94 5.00 L0.94 4.00 L1.87 3.91 L2.22 3.05 L1.62 2.33 L2.33 1.62 L3.05 2.22 L3.91 1.87 L4.00 0.94 L5.00 0.94 L5.09 1.87 L5.95 2.22 L6.67 1.62 L7.38 2.33 L6.78 3.05Z" fill="#6f6f6f"/><circle cx="4.5" cy="4.5" r="1.45" fill="#ececec"/></svg>
<div class="a" style="left:668.80px;top:458.90px;width:119.40px;height:8.50px;background:#fff;border-radius:2px;box-shadow:0 0 0 0.5px #cfcfcf"></div>
<svg class="a" style="left:711px;top:459px" width="6" height="7" viewBox="0 0 6 7"><circle cx="2.6" cy="2.9" r="1.7" fill="none" stroke="#888" stroke-width="0.6"/><path d="M3.8 4.1L5.2 5.6" stroke="#888" stroke-width="0.7"/></svg>
<div class="t" style="left:720.00px;top:461.00px;font-size:5.600px;font-weight:normal;color:#b5b5b5;">Search</div>
</body></html>
